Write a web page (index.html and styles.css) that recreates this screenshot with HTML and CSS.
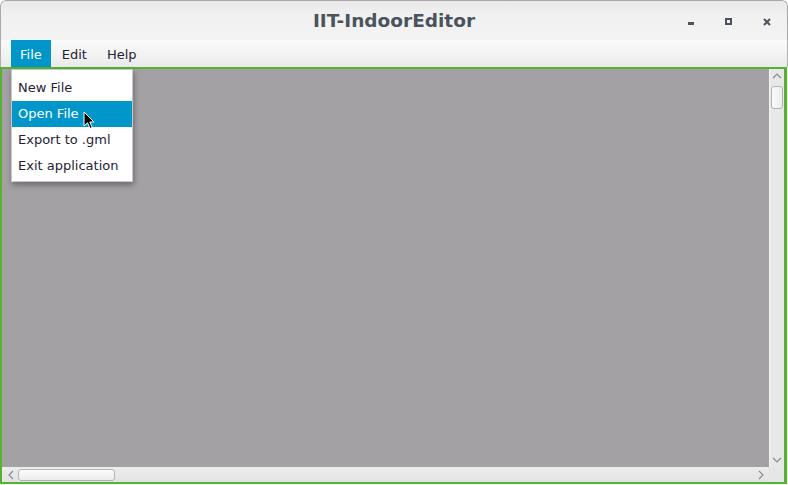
FILE: index.html
```html
<!DOCTYPE html>
<html>
<head>
<meta charset="utf-8">
<link rel="stylesheet" href="styles.css">
</head>
<body>
<div class="window">
  <div class="titlebar">
    <div class="title">IIT-IndoorEditor</div>
    <div class="controls">
      <span class="ctl ctl-min"></span>
      <span class="ctl ctl-max"></span>
      <span class="ctl ctl-close">
        <svg width="8" height="8" viewBox="0 0 8 8"><path d="M1 1 L7 7 M7 1 L1 7" stroke="#4b545c" stroke-width="2"/></svg>
      </span>
    </div>
  </div>
  <div class="menubar">
    <div class="menu active">File</div>
    <div class="menu">Edit</div>
    <div class="menu">Help</div>
  </div>
  <div class="frame">
    <div class="canvas"></div>
    <div class="vscroll">
      <svg class="arrow" width="10" height="6" viewBox="0 0 10 6"><path d="M1 5 L5 1 L9 5" fill="none" stroke="#8a8a8a" stroke-width="1.2"/></svg>
      <div class="vthumb"></div>
      <div class="spacer"></div>
      <svg class="arrow" width="10" height="6" viewBox="0 0 10 6"><path d="M1 1 L5 5 L9 1" fill="none" stroke="#8a8a8a" stroke-width="1.2"/></svg>
    </div>
    <div class="hscroll">
      <svg class="arrow" width="6" height="10" viewBox="0 0 6 10"><path d="M5 1 L1 5 L5 9" fill="none" stroke="#8a8a8a" stroke-width="1.2"/></svg>
      <div class="hthumb"></div>
      <div class="spacer"></div>
      <svg class="arrow" width="6" height="10" viewBox="0 0 6 10"><path d="M1 1 L5 5 L1 9" fill="none" stroke="#8a8a8a" stroke-width="1.2"/></svg>
    </div>
    <div class="corner"></div>
  </div>
  <div class="popup">
    <div class="item">New File</div>
    <div class="item selected">Open File</div>
    <div class="item">Export to .gml</div>
    <div class="item">Exit application</div>
  </div>
  <svg class="cursor" width="13" height="19" viewBox="0 0 13 19"><path d="M1 1 L1 15 L4.5 11.8 L7 17.5 L9.2 16.5 L6.8 11 L11 11 Z" fill="#000" stroke="#fff" stroke-width="1" stroke-linejoin="round"/></svg>
</div>
</body>
</html>
```

FILE: styles.css
```css
* { box-sizing: border-box; }
html, body {
  margin: 0;
  padding: 0;
  background: #ffffff;
}
body {
  width: 788px;
  height: 485px;
  overflow: hidden;
  font-family: "DejaVu Sans", sans-serif;
}
.window {
  position: relative;
  width: 788px;
  height: 485px;
  display: flex;
  flex-direction: column;
  background: #f2f2f2;
  border-top-left-radius: 6px;
  border-top-right-radius: 6px;
  overflow: hidden;
}
.titlebar {
  height: 40px;
  flex: none;
  display: flex;
  align-items: center;
  justify-content: center;
  position: relative;
  background: linear-gradient(#e9e9e9, #f1f1f1 40%, #f3f3f3);
  border-top: 1px solid #a8a8a8;
  border-left: 1px solid #a8a8a8;
  border-right: 1px solid #a8a8a8;
  border-top-left-radius: 6px;
  border-top-right-radius: 6px;
}
.title {
  font-weight: bold;
  font-size: 18.5px;
  color: #4b545c;
}
.controls {
  position: absolute;
  right: 16px;
  top: 16px;
  display: flex;
  gap: 31px;
  align-items: flex-start;
}
.ctl {
  display: block;
  width: 8px;
  height: 8px;
}
.ctl-min {
  width: 6px;
  height: 3px;
  margin-top: 5px;
  background: #4b545c;
}
.ctl-max {
  width: 7px;
  height: 7px;
  border: 2px solid #4b545c;
  margin-top: 1px;
}
.ctl-close svg { display: block; margin-top: 1px; }
.menubar {
  height: 27px;
  flex: none;
  display: flex;
  gap: 2px;
  padding-left: 10px;
  background: linear-gradient(#fafafa, #f3f3f3 50%, #eaeaea);
  border-left: 1px solid #b0b0b0;
  border-right: 1px solid #b0b0b0;
}
.menu {
  padding: 2px 9px 0;
  font-size: 13px;
  line-height: 25px;
  color: #1f2233;
}
.menu.active {
  background: #0096c9;
  color: #ffffff;
}
.frame {
  flex: 1;
  margin: 0 1px 1px 0;
  border: 2px solid #58b232;
  border-right-width: 3px;
  display: grid;
  grid-template-columns: 1fr 15px;
  grid-template-rows: 1fr 15px;
  background: #a4a1a4;
}
.canvas { background: #a4a1a4; }
.vscroll {
  background: #e8e8e8;
  border-left: 1px solid #f4f4f4;
  display: flex;
  flex-direction: column;
  align-items: center;
  padding: 4px 0 4px;
}
.vthumb {
  width: 12px;
  height: 23px;
  margin-top: 7px;
  border: 1px solid #b3b3b3;
  border-radius: 3px;
  background: linear-gradient(90deg, #fbfbfb, #ececec);
}
.spacer { flex: 1; }
.hscroll {
  background: linear-gradient(#ececec, #e4e4e4);
  display: flex;
  align-items: center;
  padding: 0 5px 0 5px;
}
.hscroll .arrow:first-child { margin-left: 1px; }
.hthumb {
  width: 97px;
  height: 12px;
  margin-left: 4px;
  border: 1px solid #b3b3b3;
  border-radius: 3px;
  background: linear-gradient(#fbfbfb, #ececec);
}
.corner { background: #e6e6e6; }
.arrow { display: block; flex: none; }
.popup {
  position: absolute;
  left: 11px;
  top: 69px;
  width: 122px;
  height: 113px;
  background: #ffffff;
  border: 1px solid #c8c8c8;
  padding-top: 5px;
  box-shadow: 1px 3px 6px rgba(0, 0, 0, 0.35);
}
.item {
  height: 26px;
  line-height: 26px;
  padding-left: 6px;
  font-size: 13px;
  color: #1f2233;
}
.item.selected {
  background: #0096c9;
  color: #ffffff;
}
.cursor {
  position: absolute;
  left: 83px;
  top: 111px;
}
```
